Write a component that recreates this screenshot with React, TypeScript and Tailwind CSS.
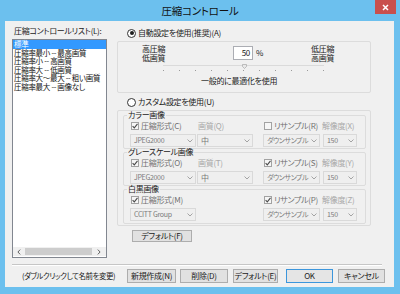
import React from 'react';

const base = "font-['Noto_Sans_CJK_JP','Noto_Sans',sans-serif] [font-feature-settings:'palt'] text-[8px] tracking-[-0.3px] whitespace-nowrap text-[#1a1a1a]";

const Check = ({ on }: { on: boolean }) => (
  <span className="flex h-[8px] w-[8px] shrink-0 items-center justify-center border border-[#a2a2a2] bg-[#f6f6f6]">
    {on && (
      <svg viewBox="0 0 6 6" className="h-[6px] w-[6px]">
        <path d="M0.6 3.1 L2.3 4.9 L5.5 0.9" fill="none" stroke="#4a4a4a" strokeWidth="1.1" />
      </svg>
    )}
  </span>
);

const Radio = ({ on }: { on: boolean }) => (
  <span className="flex h-[9px] w-[9px] shrink-0 items-center justify-center rounded-full border border-[#333] bg-white">
    {on && <span className="h-[4px] w-[4px] rounded-full bg-[#1e1e1e]" />}
  </span>
);

const Chevron = () => (
  <svg viewBox="0 0 6 4" className="h-[4px] w-[6px] shrink-0">
    <path d="M0.5 0.5 L3 3 L5.5 0.5" fill="none" stroke="#9a9a9a" strokeWidth="0.9" />
  </svg>
);

const Drop = ({ text, className = '' }: { text: string; className?: string }) => (
  <div className={`flex h-[13px] items-center justify-between border border-[#d9d9d9] bg-[#efefef] pl-[3px] pr-[2px] text-[#7a7a7a] ${className}`}>
    <span>{text}</span>
    <Chevron />
  </div>
);

const Btn = ({ children, className = '' }: { children: React.ReactNode; className?: string }) => (
  <div className={`flex h-[14px] shrink-0 items-center justify-center border border-[#adadad] bg-[#e1e1e1] ${className}`}>
    {children}
  </div>
);

const Group = ({ title, children }: { title: string; children: React.ReactNode }) => (
  <fieldset className="rounded-[2px] border border-[#dcdcdc] pl-[6px] pr-[4px]">
    <legend className="-ml-[3px] px-[1px] leading-[6px] text-[#1a1a1a]">{title}</legend>
    {children}
  </fieldset>
);

type Row = {
  title: string;
  fmt: string;
  fmtOn: boolean;
  drop: string;
  quality?: string;
  rs: string;
  rsOn: boolean;
  res: string;
  pb: string;
};

const rows: Row[] = [
  { title: 'カラー画像', fmt: '圧縮形式(C)', fmtOn: true, drop: 'JPEG2000', quality: '画質(Q)', rs: 'リサンプル(R)', rsOn: false, res: '解像度(X)', pb: 'pb-[1px]' },
  { title: 'グレースケール画像', fmt: '圧縮形式(O)', fmtOn: true, drop: 'JPEG2000', quality: '画質(T)', rs: 'リサンプル(S)', rsOn: true, res: '解像度(Y)', pb: 'pb-[1px]' },
  { title: '白黒画像', fmt: '圧縮形式(M)', fmtOn: true, drop: 'CCITT Group', rs: 'リサンプル(P)', rsOn: true, res: '解像度(Z)', pb: 'pb-[2px]' },
];

const listItems = [
  '標準',
  '圧縮率最小 -- 最高画質',
  '圧縮率小 -- 高画質',
  '圧縮率大 -- 低画質',
  '圧縮率大～最大 -- 粗い画質',
  '圧縮率最大 -- 画像なし',
];

const ticks = Array.from({ length: 11 });

export default function App() {
  return (
    <div className={`flex h-[294px] w-[400px] flex-col bg-[#6cc0ee] pb-[7px] pl-[5px] pr-[6px] ${base}`}>
      {/* Title bar */}
      <div className="-ml-[5px] -mr-[6px] grid h-[21px] shrink-0 grid-cols-[1fr_auto_1fr]">
        <div />
        <div className="pt-[3px] text-[10.5px] leading-[16px] tracking-[-0.2px] text-[#111]">圧縮コントロール</div>
        <div className="flex justify-end pr-[4px]">
          <div className="flex h-[14px] w-[21px] items-center justify-center bg-[#c9504c]">
            <svg viewBox="0 0 7 7" className="h-[7px] w-[7px]">
              <path d="M1 1 L6 6 M6 1 L1 6" stroke="#fff" strokeWidth="1.5" />
            </svg>
          </div>
        </div>
      </div>

      {/* Client */}
      <div className="flex flex-1 flex-col bg-[#f0f0f0]">
        <div className="flex h-[237px] shrink-0">
          {/* list column */}
          <div className="flex w-[102px] shrink-0 flex-col pl-[7px] pt-[5px]">
            <div className="h-[13px] pl-[2px] leading-[10px]">圧縮コントロールリスト(L):</div>
            <div className="flex h-[219px] w-[95px] flex-col border border-[#828790] bg-white">
              <div className="flex-1 overflow-x-clip text-[7.5px]">
                {listItems.map((t, i) => (
                  <div
                    key={t}
                    className={`h-[8.6px] pl-[1px] leading-[8.6px] ${i === 0 ? 'bg-[#3399ff] text-white' : 'text-[#111]'}`}
                  >
                    {t}
                  </div>
                ))}
              </div>
              <div className="mb-[1px] flex h-[9px] items-center bg-[#f0f0f0]">
                <div className="flex w-[12px] justify-center">
                  <svg viewBox="0 0 4 6" className="h-[6px] w-[4px]">
                    <path d="M3.2 0.6 L0.9 3 L3.2 5.4" fill="none" stroke="#606060" strokeWidth="1" />
                  </svg>
                </div>
                <div className="h-[7px] w-[67px] bg-[#cdcdcd]" />
                <div className="flex flex-1 justify-center">
                  <svg viewBox="0 0 4 6" className="h-[6px] w-[4px]">
                    <path d="M0.8 0.6 L3.1 3 L0.8 5.4" fill="none" stroke="#606060" strokeWidth="1" />
                  </svg>
                </div>
              </div>
            </div>
          </div>

          {/* settings column */}
          <div className="ml-[10px] flex w-[254px] shrink-0 flex-col pt-[7px]">
            <div className="flex h-[10px] items-center gap-[2px] pl-[10px]">
              <Radio on />
              <span>自動設定を使用(推奨)(A)</span>
            </div>

            <div className="mt-[3px] h-[52px] rounded-[2px] border border-[#dcdcdc]">
              <div className="mt-[2px] flex h-[18px] items-center">
                <div className="ml-[24px] w-[91px] leading-[9px]">
                  高圧縮
                  <br />
                  低画質
                </div>
                <div className="flex h-[14px] w-[20px] items-center justify-end border border-[#abadb3] bg-white pr-[2px]">50</div>
                <span className="ml-[3px]">%</span>
                <div className="ml-[48px] leading-[9px]">
                  低圧縮
                  <br />
                  高画質
                </div>
              </div>
              <div className="relative ml-[45px] mt-[1px] flex h-[9px] w-[161px] flex-col">
                <div className="mt-[2px] h-px bg-[#dadada]" />
                <div className="mt-[4px] flex justify-between">
                  {ticks.map((_, i) => (
                    <span key={i} className="h-px w-px bg-[#9a9a9a]" />
                  ))}
                </div>
                <svg viewBox="0 0 5 5" className="absolute left-[79px] top-[1px] h-[5px] w-[5px]">
                  <path d="M0.5 0.5 H4.5 V2.5 L2.5 4.5 L0.5 2.5 Z" fill="#e8e8e8" stroke="#a8a8a8" strokeWidth="0.7" />
                </svg>
              </div>
              <div className="ml-[83px] mt-[4px] h-[10px] leading-[10px]">一般的に最適化を使用</div>
            </div>

            <div className="mt-[4px] flex h-[10px] items-center gap-[2px] pl-[10px]">
              <Radio on={false} />
              <span>カスタム設定を使用(U)</span>
            </div>

            <div className="mt-[3px] flex h-[116px] flex-col rounded-[2px] border border-[#dcdcdc] pl-[5px] pr-[4px] pt-[1px]">
              {rows.map((r) => (
                <Group key={r.title} title={r.title}>
                  <div className={`mt-[3px] flex ${r.pb}`}>
                    <div className="w-[66px]">
                      <div className="flex h-[10px] items-center gap-[2px] pl-[1px] text-[#707070]">
                        <Check on={r.fmtOn} />
                        <span>{r.fmt}</span>
                      </div>
                      <Drop className="mt-[3px] text-[7px]" text={r.drop} />
                    </div>
                    <div className="ml-[1px] w-[56px]">
                      {r.quality && (
                        <>
                          <div className="flex h-[10px] items-center pl-[1px] text-[#a8a8a8]">{r.quality}</div>
                          <Drop className="mt-[3px]" text="中" />
                        </>
                      )}
                    </div>
                    <div className="ml-[10px] w-[57px]">
                      <div className="flex h-[10px] items-center gap-[2px] pl-[1px] text-[#707070]">
                        <Check on={r.rsOn} />
                        <span>{r.rs}</span>
                      </div>
                      <Drop className="mt-[3px] text-[7px] tracking-[-0.5px]" text="ダウンサンプル" />
                    </div>
                    <div className="ml-[3px] w-[34px]">
                      <div className="-ml-[1px] flex h-[10px] items-center text-[#a8a8a8]">{r.res}</div>
                      <Drop className="mt-[3px] text-[7px]" text="150" />
                    </div>
                  </div>
                </Group>
              ))}
            </div>

            <Btn className="ml-[15px] mt-[4px] !h-[12px] w-[60px]">デフォルト(F)</Btn>
          </div>
        </div>

        {/* separator */}
        <div className="ml-[7px] mr-[12px] mt-[6px] h-[2px] border-b border-t border-b-white border-t-[#c6c6c6]" />

        {/* bottom buttons */}
        <div className="mt-[3px] flex h-[14px] items-center">
          <div className="ml-[17px] w-[105px] text-[7.5px] tracking-[-0.5px]">(ダブルクリックして名前を変更)</div>
          <Btn className="w-[49px]">新規作成(N)</Btn>
          <Btn className="ml-[4px] w-[48px]">削除(D)</Btn>
          <Btn className="ml-[5px] w-[45px]">デフォルト(E)</Btn>
          <Btn className="ml-[8px] w-[47px] !border-[#3c96dc] bg-[#e5e5e5]">OK</Btn>
          <Btn className="ml-[5px] w-[47px]">キャンセル</Btn>
        </div>
      </div>
    </div>
  );
}
